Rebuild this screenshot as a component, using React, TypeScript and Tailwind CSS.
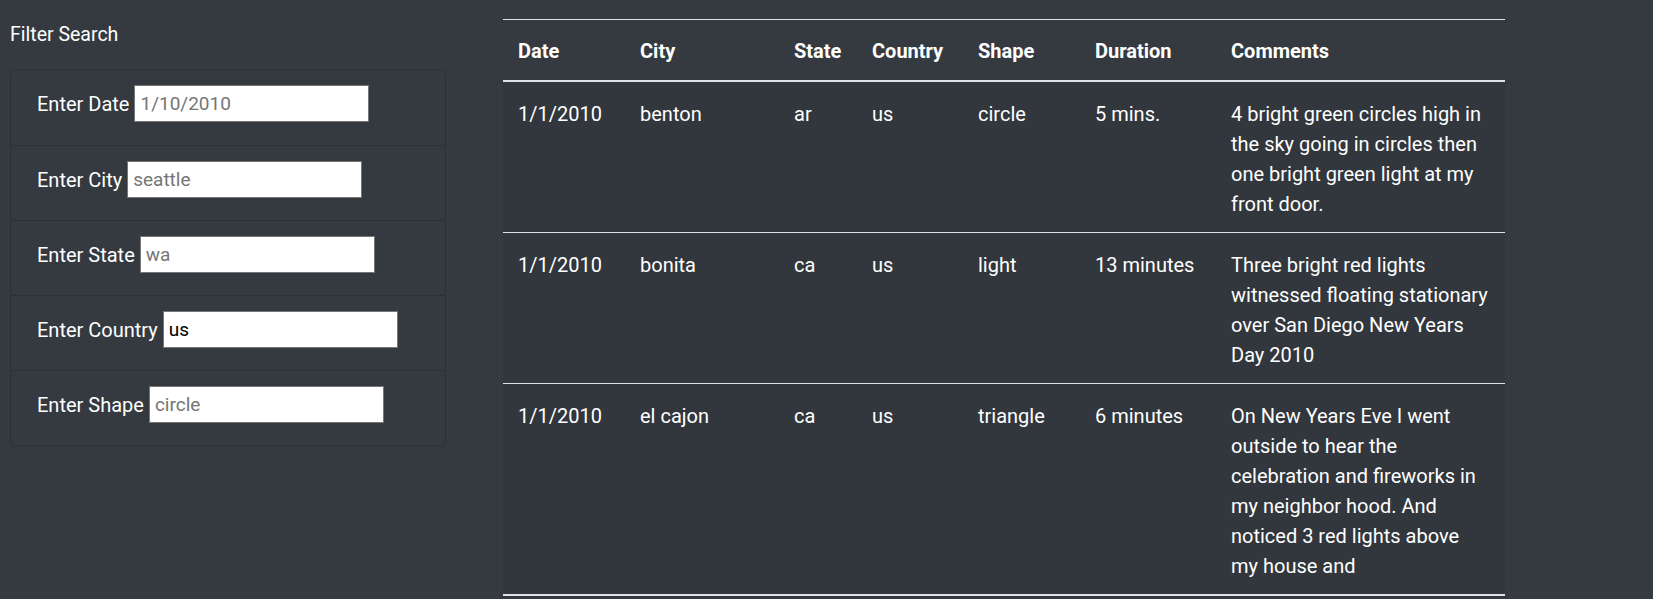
const filters = [
  { label: "Enter Date", placeholder: "1/10/2010" },
  { label: "Enter City", placeholder: "seattle" },
  { label: "Enter State", placeholder: "wa" },
  { label: "Enter Country", value: "us" },
  { label: "Enter Shape", placeholder: "circle" },
];

const rows = [
  {
    date: "1/1/2010",
    city: "benton",
    state: "ar",
    country: "us",
    shape: "circle",
    duration: "5 mins.",
    comments: [
      "4 bright green circles high in",
      "the sky going in circles then",
      "one bright green light at my",
      "front door.",
    ],
  },
  {
    date: "1/1/2010",
    city: "bonita",
    state: "ca",
    country: "us",
    shape: "light",
    duration: "13 minutes",
    comments: [
      "Three bright red lights",
      "witnessed floating stationary",
      "over San Diego New Years",
      "Day 2010",
    ],
  },
  {
    date: "1/1/2010",
    city: "el cajon",
    state: "ca",
    country: "us",
    shape: "triangle",
    duration: "6 minutes",
    comments: [
      "On New Years Eve I went",
      "outside to hear the",
      "celebration and fireworks in",
      "my neighbor hood. And",
      "noticed 3 red lights above",
      "my house and",
    ],
  },
];

const headers = ["Date", "City", "State", "Country", "Shape", "Duration", "Comments"];
const widths = ["w-[122px]", "w-[154px]", "w-[78px]", "w-[106px]", "w-[117px]", "w-[136px]", "w-[289px]"];

export default function App() {
  return (
    <div className="min-h-screen bg-[#343a40] text-white font-['Roboto',sans-serif] text-[20px] leading-[30px]">
      <div className="flex items-start">
        {/* filter sidebar */}
        <aside className="ml-[10px] w-[436px] pt-[20px]">
          <h5 className="h-[30px] text-[19.5px]">Filter Search</h5>
          <ul className="mt-[19px] rounded-[5px] border border-[#2c3036]">
            {filters.map((f, i) => (
              <li
                key={f.label}
                className={`flex h-[75px] items-start pl-[26px] pt-[15px] ${i > 0 ? "border-t border-[#2c3036]" : ""}`}
              >
                <label className="flex h-[37px] items-center">
                  <span className="mr-[5px]">{f.label}</span>
                  <input
                    className="h-[37px] w-[235px] border border-[#767676] bg-white px-[5px] text-[19px] text-black placeholder:text-[#757575] outline-none"
                    placeholder={f.placeholder}
                    defaultValue={f.value}
                  />
                </label>
              </li>
            ))}
          </ul>
        </aside>

        {/* results table */}
        <table className="ml-[57px] mt-[19px] w-[1002px] table-fixed border-collapse">
          <thead>
            <tr className="border-t border-b-2 border-[#dee2e6]">
              {headers.map((h, i) => (
                <th key={h} className={`${widths[i]} px-[15px] pt-[16px] pb-[14px] text-left font-bold`}>
                  {h}
                </th>
              ))}
            </tr>
          </thead>
          <tbody>
            {rows.map((r, i) => (
              <tr
                key={r.city}
                className={`bg-[#32363d] align-top ${i > 0 ? "border-t border-[#dee2e6]" : ""} ${i === rows.length - 1 ? "border-b-2 border-b-[#dee2e6]" : ""}`}
              >
                <td className="px-[15px] pt-[17px] pb-[13px] whitespace-nowrap">{r.date}</td>
                <td className="px-[15px] pt-[17px] pb-[13px] whitespace-nowrap">{r.city}</td>
                <td className="px-[15px] pt-[17px] pb-[13px] whitespace-nowrap">{r.state}</td>
                <td className="px-[15px] pt-[17px] pb-[13px] whitespace-nowrap">{r.country}</td>
                <td className="px-[15px] pt-[17px] pb-[13px] whitespace-nowrap">{r.shape}</td>
                <td className="px-[15px] pt-[17px] pb-[13px] whitespace-nowrap">{r.duration}</td>
                <td className="px-[15px] pt-[17px] pb-[13px]">
                  {r.comments.map((c) => (
                    <span key={c} className="block whitespace-nowrap">
                      {c}
                    </span>
                  ))}
                </td>
              </tr>
            ))}
          </tbody>
        </table>
      </div>
    </div>
  );
}
